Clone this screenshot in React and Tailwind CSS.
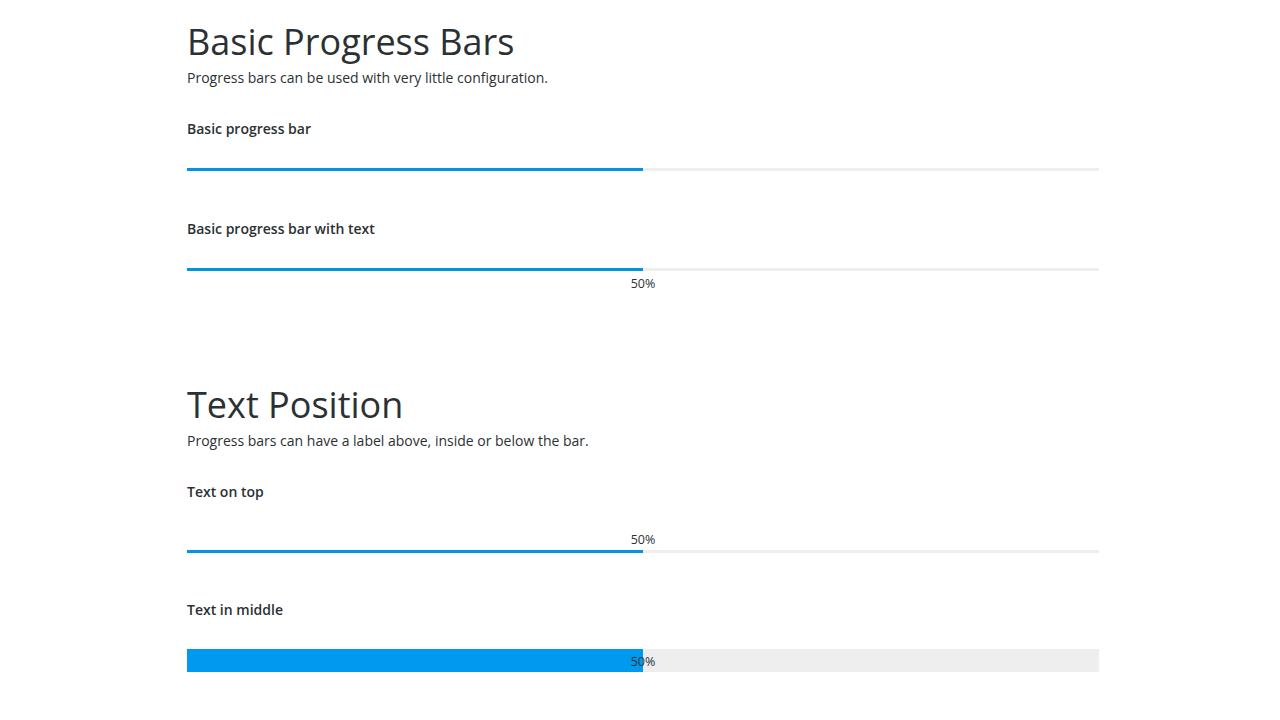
import React from 'react';

const Bar = ({ value, thick }) => (
    <div className={`relative w-full bg-[#eeeeee] ${thick ? 'h-[23px]' : 'h-[3px]'}`}>
        <div className={`h-full ${thick ? 'bg-[#0099f0]' : 'bg-[#0094e2]'}`} style={{ width: `${value}%` }} />
        {thick && (
            <span
                className="absolute top-0 h-full pt-[3px] flex items-center text-[12.5px] text-[#2b3133] -translate-x-1/2"
                style={{ left: `${value}%` }}
            >
                {value}%
            </span>
        )}
    </div>
);

const Label = ({ value }) => (
    <div className="relative h-4 w-full">
        <span
            className="absolute top-0 text-[12.5px] leading-4 text-[#2b3133] -translate-x-1/2"
            style={{ left: `${value}%` }}
        >
            {value}%
        </span>
    </div>
);

const Example = ({ title, children, className = '' }) => (
    <div className={className}>
        <h3 className="text-[14px] leading-5 font-semibold text-[#2b3133]">{title}</h3>
        {children}
    </div>
);

export default function App() {
    return (
        <div className="min-h-[720px] bg-white font-['Open_Sans',sans-serif] text-[#2b3133]">
            <div className="ml-[187px] w-[912px] pt-[20px]">
                {/* Basic */}
                <section>
                    <h1 className="text-[36px] leading-[44px] font-normal">Basic Progress Bars</h1>
                    <p className="mt-1 text-[14px] leading-5">Progress bars can be used with very little configuration.</p>

                    <Example title="Basic progress bar" className="mt-[31px]">
                        <div className="mt-[29px]">
                            <Bar value={50} />
                        </div>
                    </Example>

                    <Example title="Basic progress bar with text" className="mt-[48px]">
                        <div className="mt-[29px]">
                            <Bar value={50} />
                        </div>
                        <div className="mt-[5px]">
                            <Label value={50} />
                        </div>
                    </Example>
                </section>

                {/* Text position */}
                <section className="mt-[91px]">
                    <h1 className="text-[36px] leading-[44px] font-normal">Text Position</h1>
                    <p className="mt-1 text-[14px] leading-5">Progress bars can have a label above, inside or below the bar.</p>

                    <Example title="Text on top" className="mt-[31px]">
                        <div className="mt-[30px]">
                            <Label value={50} />
                        </div>
                        <div className="mt-[2px]">
                            <Bar value={50} />
                        </div>
                    </Example>

                    <Example title="Text in middle" className="mt-[47px]">
                        <div className="mt-[29px]">
                            <Bar value={50} thick />
                        </div>
                    </Example>
                </section>
            </div>
        </div>
    );
}
